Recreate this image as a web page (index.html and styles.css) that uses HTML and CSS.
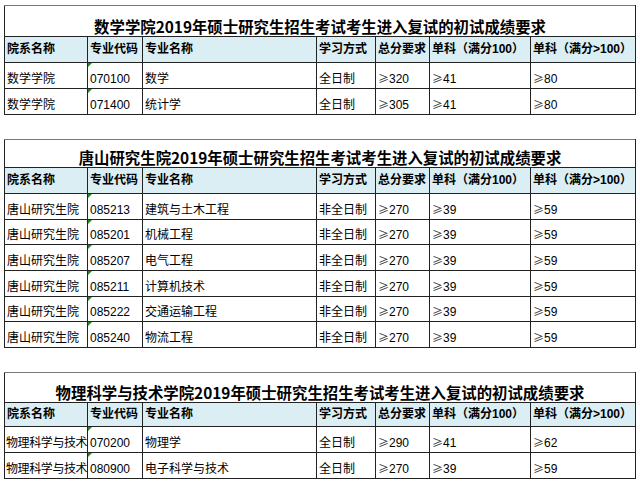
FILE: index.html
```html
<!DOCTYPE html>
<html lang="zh-CN">
<head>
<meta charset="utf-8">
<title>初试成绩要求</title>
<link rel="stylesheet" href="styles.css">
</head>
<body>
<div class="sheet">

<table class="grid t1">
<colgroup><col class="c1"><col class="c2"><col class="c3"><col class="c4"><col class="c5"><col class="c6"><col class="c7"></colgroup>
<tr class="title title1"><td colspan="7">数学学院2019年硕士研究生招生考试考生进入复试的初试成绩要求</td></tr>
<tr class="head"><td>院系名称</td><td>专业代码</td><td>专业名称</td><td>学习方式</td><td>总分要求</td><td>单科（满分100）</td><td>单科（满分&gt;100）</td></tr>
<tr class="row"><td>数学学院</td><td class="code">070100</td><td>数学</td><td>全日制</td><td><span class="ge">≥</span>320</td><td><span class="ge">≥</span>41</td><td><span class="ge">≥</span>80</td></tr>
<tr class="row"><td>数学学院</td><td class="code">071400</td><td>统计学</td><td>全日制</td><td><span class="ge">≥</span>305</td><td><span class="ge">≥</span>41</td><td><span class="ge">≥</span>80</td></tr>
</table>

<div class="gap"></div>

<table class="grid t2">
<colgroup><col class="c1"><col class="c2"><col class="c3"><col class="c4"><col class="c5"><col class="c6"><col class="c7"></colgroup>
<tr class="title title2"><td colspan="7">唐山研究生院2019年硕士研究生招生考试考生进入复试的初试成绩要求</td></tr>
<tr class="head"><td>院系名称</td><td>专业代码</td><td>专业名称</td><td>学习方式</td><td>总分要求</td><td>单科（满分100）</td><td>单科（满分&gt;100）</td></tr>
<tr class="row r2"><td>唐山研究生院</td><td class="code">085213</td><td>建筑与土木工程</td><td>非全日制</td><td><span class="ge">≥</span>270</td><td><span class="ge">≥</span>39</td><td><span class="ge">≥</span>59</td></tr>
<tr class="row r2"><td>唐山研究生院</td><td class="code">085201</td><td>机械工程</td><td>非全日制</td><td><span class="ge">≥</span>270</td><td><span class="ge">≥</span>39</td><td><span class="ge">≥</span>59</td></tr>
<tr class="row r2"><td>唐山研究生院</td><td class="code">085207</td><td>电气工程</td><td>非全日制</td><td><span class="ge">≥</span>270</td><td><span class="ge">≥</span>39</td><td><span class="ge">≥</span>59</td></tr>
<tr class="row r2"><td>唐山研究生院</td><td class="code">085211</td><td>计算机技术</td><td>非全日制</td><td><span class="ge">≥</span>270</td><td><span class="ge">≥</span>39</td><td><span class="ge">≥</span>59</td></tr>
<tr class="row r2"><td>唐山研究生院</td><td class="code">085222</td><td>交通运输工程</td><td>非全日制</td><td><span class="ge">≥</span>270</td><td><span class="ge">≥</span>39</td><td><span class="ge">≥</span>59</td></tr>
<tr class="row r2"><td>唐山研究生院</td><td class="code">085240</td><td>物流工程</td><td>非全日制</td><td><span class="ge">≥</span>270</td><td><span class="ge">≥</span>39</td><td><span class="ge">≥</span>59</td></tr>
</table>

<div class="gap gap2"></div>

<table class="grid t3">
<colgroup><col class="c1"><col class="c2"><col class="c3"><col class="c4"><col class="c5"><col class="c6"><col class="c7"></colgroup>
<tr class="title title3"><td colspan="7">物理科学与技术学院2019年硕士研究生招生考试考生进入复试的初试成绩要求</td></tr>
<tr class="head head3"><td>院系名称</td><td>专业代码</td><td>专业名称</td><td>学习方式</td><td>总分要求</td><td>单科（满分100）</td><td>单科（满分&gt;100）</td></tr>
<tr class="row"><td class="tight">物理科学与技术</td><td class="code">070200</td><td>物理学</td><td>全日制</td><td><span class="ge">≥</span>290</td><td><span class="ge">≥</span>41</td><td><span class="ge">≥</span>62</td></tr>
<tr class="row"><td class="tight">物理科学与技术</td><td class="code">080900</td><td>电子科学与技术</td><td>全日制</td><td><span class="ge">≥</span>270</td><td><span class="ge">≥</span>39</td><td><span class="ge">≥</span>59</td></tr>
</table>

</div>
</body>
</html>
```

FILE: styles.css
```css
html, body {
  margin: 0;
  padding: 0;
  background: #ffffff;
}

.sheet {
  padding: 5px 0 0 4px;
  font-family: "Liberation Sans", "Noto Sans CJK SC", sans-serif;
  color: #000;
}

.grid {
  border-collapse: collapse;
  table-layout: fixed;
  width: 631px;
}

.c1 { width: 83px; }
.c2 { width: 55px; }
.c3 { width: 174px; }
.c4 { width: 59px; }
.c5 { width: 54px; }
.c6 { width: 101px; }
.c7 { width: 105px; }

.grid td {
  border: 1px solid #222;
  padding: 0 0 2px 2px;
  font-size: 12px;
  line-height: 14px;
  white-space: nowrap;
  overflow: hidden;
  vertical-align: bottom;
}

.grid td.tight {
  padding-left: 1px;
  letter-spacing: -0.4px;
}

.title td {
  text-align: center;
  font-family: "Noto Sans CJK SC", sans-serif;
  font-weight: 700;
  font-size: 15.4px;
  line-height: 20px;
  padding: 0 0 0 0;
  border-top-color: #777;
}

.title1 { height: 31px; }
.title2 { height: 28px; }
.title3 { height: 30px; }

.head td {
  background: #daeef3;
  font-weight: 700;
  vertical-align: middle;
  padding: 0 0 1px 2px;
}
.head { height: 26px; }
.head3 { height: 24px; }

.row { height: 26px; }
.r2 { height: 25.7px; }

.code {
  position: relative;
}
.code::before {
  content: "";
  position: absolute;
  left: 0;
  top: 0;
  width: 0;
  height: 0;
  border-top: 4px solid #1e8a1e;
  border-right: 4px solid transparent;
}

.ge {
  font-family: "Noto Sans CJK SC", sans-serif;
  font-size: 11px;
  color: #333;
}

.gap { height: 24px; }
.gap2 { height: 24px; }
```
